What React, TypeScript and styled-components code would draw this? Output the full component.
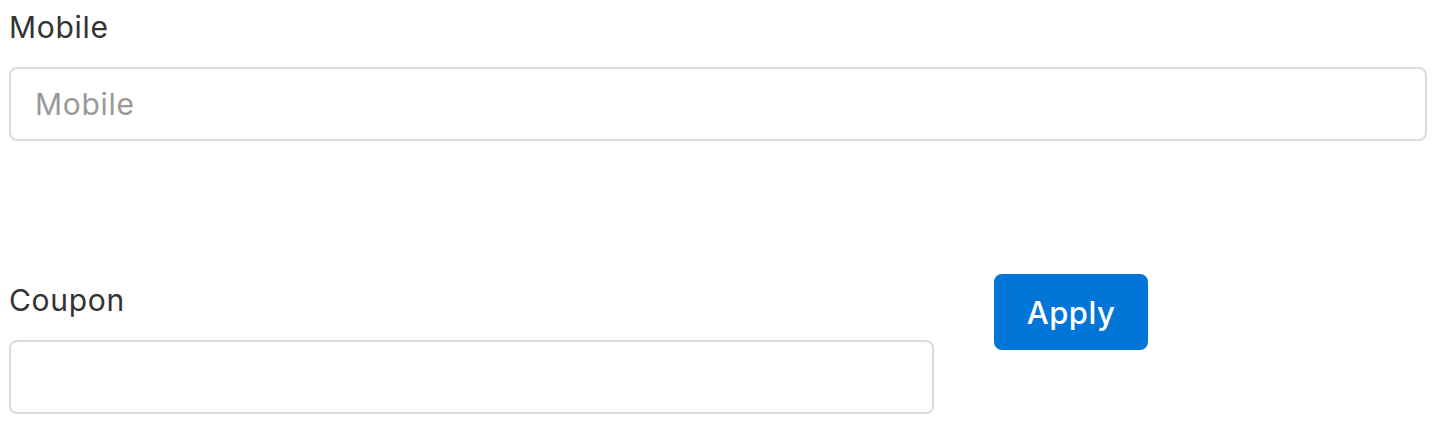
import React from "react";
import styled, { createGlobalStyle } from "styled-components";

const Global = createGlobalStyle`
  html, body { margin: 0; padding: 0; background: #fff; }
  body { font-family: Inter, "Liberation Sans", sans-serif; color: #333; }
  * { box-sizing: border-box; }
`;

const Page = styled.div`
  padding: 1px 13px 0 9px;
  display: flex;
  flex-direction: column;
`;

const Group = styled.div<{ $width?: string }>`
  display: flex;
  flex-direction: column;
  width: ${(p) => p.$width ?? "100%"};
`;

const Label = styled.label`
  font-size: 30px;
  letter-spacing: 0.7px;
  line-height: 52px;
  color: #333;
  margin-bottom: 14px;
`;

const Input = styled.input`
  height: 74px;
  width: 100%;
  border: 2px solid #dcdcdc;
  border-radius: 8px;
  padding: 0 24px;
  font-family: inherit;
  font-size: 30px;
  letter-spacing: 0.7px;
  color: #333;
  outline: none;
  &::placeholder { color: #999; }
`;

const Row = styled.div`
  display: flex;
  align-items: flex-start;
  gap: 60px;
  margin-top: 133px;
`;

const Button = styled.button`
  height: 76px;
  width: 154px;
  border: none;
  border-radius: 8px;
  background: #0275d8;
  color: #fff;
  font-family: inherit;
  font-size: 31px;
  letter-spacing: 0.5px;
  font-weight: 500;
  cursor: pointer;
`;

export default function App() {
  return (
    <>
      <Global />
      <Page>
        <Group>
          <Label>Mobile</Label>
          <Input placeholder="Mobile" />
        </Group>
        <Row>
          <Group $width="925px">
            <Label>Coupon</Label>
            <Input />
          </Group>
          <Button>Apply</Button>
        </Row>
      </Page>
    </>
  );
}
